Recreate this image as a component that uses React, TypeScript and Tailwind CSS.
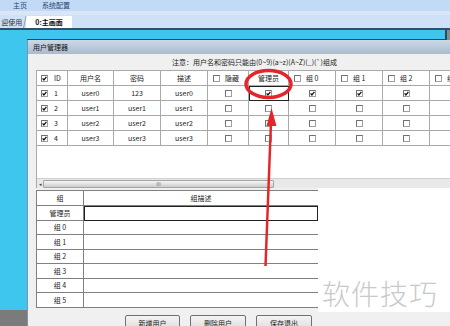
import React from "react";

function Cb({ checked }: { checked?: boolean }) {
  return (
    <svg width="7" height="7" viewBox="0 0 7 7" className="shrink-0 block">
      <rect x="0.5" y="0.5" width="6" height="6" fill="#ffffff" stroke="#a0a0a0" />
      <path d="M0.5 6.5 V0.5 H6.5" stroke="#707070" strokeWidth="1" fill="none" />
      {checked && <path d="M1.6 3.4 L2.9 4.9 L5.4 1.8" stroke="#111" strokeWidth="1.3" fill="none" />}
    </svg>
  );
}

const widths = [31, 46, 47, 47, 41, 40, 47, 47, 47, 47];

type Cell = { kind: "text"; t: string } | { kind: "cb"; c: boolean } | { kind: "cbt"; c: boolean; t: string; id?: boolean };

const header: Cell[] = [
  { kind: "cbt", c: true, t: "ID", id: true },
  { kind: "text", t: "用户名" },
  { kind: "text", t: "密码" },
  { kind: "text", t: "描述" },
  { kind: "cbt", c: false, t: "隐藏" },
  { kind: "text", t: "管理员" },
  { kind: "cbt", c: false, t: "组 0" },
  { kind: "cbt", c: false, t: "组 1" },
  { kind: "cbt", c: false, t: "组 2" },
  { kind: "cbt", c: false, t: "组 3" },
];

const users = [
  ["user0", "123", "user0"],
  ["user1", "user1", "user1"],
  ["user2", "user2", "user2"],
  ["user3", "user3", "user3"],
];

function rowCells(i: number): Cell[] {
  const u = users[i];
  const first = i === 0;
  return [
    { kind: "cbt", c: true, t: String(i + 1), id: true },
    { kind: "text", t: u[0] },
    { kind: "text", t: u[1] },
    { kind: "text", t: u[2] },
    { kind: "cb", c: false },
    { kind: "cb", c: first },
    { kind: "cb", c: first },
    { kind: "cb", c: first },
    { kind: "cb", c: first },
    { kind: "cb", c: first },
  ];
}

function CellView({ cell, w, sel }: { cell: Cell; w: number; sel?: boolean }) {
  const base =
    "h-full shrink-0 border-r border-b border-[#a9a9a9] flex items-center " +
    (sel ? "outline outline-1 outline-[#222] -outline-offset-1 " : "");
  if (cell.kind === "text")
    return (
      <div className={base + "justify-center"} style={{ width: w }}>
        {cell.t}
      </div>
    );
  if (cell.kind === "cb")
    return (
      <div className={base + "justify-center"} style={{ width: w }}>
        <Cb checked={cell.c} />
      </div>
    );
  return (
    <div className={base + (cell.id ? "pl-[4px] gap-[6px]" : "pl-[5px] gap-[5px]")} style={{ width: w }}>
      <Cb checked={cell.c} />
      <span className="whitespace-nowrap">{cell.t}</span>
    </div>
  );
}

const groups = ["管理员", "组 0", "组 1", "组 2", "组 3", "组 4", "组 5"];
const gHeights = [15, 14, 15, 14, 15, 14, 15];

export default function App() {
  return (
    <div className="relative w-[450px] h-[326px] overflow-hidden bg-[#3ec6ef] font-['Noto_Sans_CJK_SC','Noto_Sans',sans-serif] text-[7px] leading-none text-[#222]">
      {/* menu bar */}
      <div className="h-[11px] bg-[#c2daf5] flex items-center text-[#2a4670]">
        <span className="ml-[13px]">主页</span>
        <span className="ml-[15px]">系统配置</span>
      </div>
      <div className="h-[4px] bg-[#d8e6f8]" />
      {/* tab strip */}
      <div className="h-[13px] bg-[#cfe1f6] flex items-end">
        <div className="h-[12px] w-[24px] flex items-center text-[#333] border-r border-[#8aa3bf] -skew-x-12 origin-bottom">
          <span className="skew-x-12">迎使用</span>
        </div>
        <div className="ml-[2px] h-[12px] w-[46px] bg-white flex items-center justify-center font-bold text-[#111]">
          0:主画面
        </div>
      </div>
      <div className="h-[2px] bg-[#2f5067]" />

      {/* desktop */}
      <div className="flex h-[296px]">
        <div className="w-[27px] flex flex-col shrink-0">
          <div className="h-[280px] shrink-0 bg-[#3ec6ef]" />
          <div className="flex-1 bg-[#7b7b7b]" />
        </div>
        <div className="flex-1 flex flex-col min-w-0">
          <div className="h-[10px] shrink-0 flex">
            <div className="flex-1 bg-[#3ec6ef] border-r-2 border-b border-[#2c4a5e]" />
            <div className="w-[3px] bg-[#8a8a8a]" />
          </div>
          {/* dialog */}
          <div className="flex-1 flex flex-col border-l border-[#7f93aa] w-[440px] min-h-0">
            <div className="h-[14px] shrink-0 bg-gradient-to-b from-[#cdd8e6] to-[#a9bbd2] flex items-center pl-[5px] text-[#111]">
              用户管理器
            </div>
            <div className="flex-1 bg-[#f0f0f0] pl-[8px] flex flex-col min-h-0">
              <div className="h-[16px] shrink-0 flex items-center pl-[136px] text-[#222] whitespace-nowrap">
                注意：用户名和密码只能由(0~9)(a~z)(A~Z)(_)(`)组成
              </div>
              {/* table 1 */}
              <div className="w-[460px] h-[118px] shrink-0 bg-white border-l border-t border-[#a9a9a9] flex flex-col">
                <div className="h-[15px] flex shrink-0">
                  {header.map((c, i) => (
                    <CellView key={i} cell={c} w={widths[i]} />
                  ))}
                </div>
                {users.map((_, r) => (
                  <div key={r} className="h-[15px] flex shrink-0">
                    {rowCells(r).map((c, i) => (
                      <CellView key={i} cell={c} w={widths[i]} sel={r === 0 && i === 5} />
                    ))}
                  </div>
                ))}
                <div className="flex-1" />
                {/* scrollbar */}
                <div className="h-[10px] shrink-0 bg-[#e9e9e9] border-t border-[#d0d0d0] flex items-center">
                  <div className="w-[6px] flex items-center justify-center text-[5px] text-[#444]">◂</div>
                  <div className="w-[231px] h-[8px] rounded-[1px] border border-[#a4a4a4] bg-gradient-to-b from-[#f6f6f6] to-[#cdcdcd] flex items-center justify-center text-[5px] text-[#666]">
                    III
                  </div>
                </div>
              </div>
              {/* bottom area */}
              <div className="flex h-[124px] shrink-0">
                <div className="w-[282px] h-[118px] mt-[2px] bg-white border-l border-t border-[#808080] flex flex-col">
                  <div className="h-[15px] flex shrink-0">
                    <div className="w-[47px] border-r border-b border-[#808080] flex items-center justify-center">组</div>
                    <div className="flex-1 border-b border-[#808080] flex items-center justify-center">组描述</div>
                  </div>
                  {groups.map((g, i) => (
                    <div key={g} className="flex shrink-0" style={{ height: gHeights[i] }}>
                      <div className="w-[47px] border-r border-b border-[#808080] flex items-center justify-center">{g}</div>
                      <div
                        className={
                          "flex-1 border-b border-[#808080] " +
                          (i === 0 ? "outline outline-1 outline-[#222] -outline-offset-1" : "")
                        }
                      />
                    </div>
                  ))}
                </div>
                <div className="flex-1 bg-white pt-[91px] pl-[4px]">
                  <span className="text-[28px] font-light tracking-[1px] text-[#c9c9c9] whitespace-nowrap">软件技巧</span>
                </div>
              </div>
              {/* buttons */}
              <div className="flex shrink-0 mt-[3px] pl-[89px] gap-[10px]">
                <div className="w-[55px] h-[16px] border border-[#707070] rounded-[2px] bg-gradient-to-b from-[#f4f4f4] to-[#dcdcdc] flex items-center justify-center">新增用户</div>
                <div className="w-[56px] h-[16px] border border-[#707070] rounded-[2px] bg-gradient-to-b from-[#f4f4f4] to-[#dcdcdc] flex items-center justify-center">删除用户</div>
                <div className="w-[56px] h-[16px] border border-[#707070] rounded-[2px] bg-gradient-to-b from-[#f4f4f4] to-[#dcdcdc] flex items-center justify-center">保存退出</div>
              </div>
            </div>
          </div>
        </div>
      </div>

      {/* red annotation */}
      <svg className="absolute inset-0 pointer-events-none" width="450" height="326" viewBox="0 0 450 326">
        <ellipse cx="268.5" cy="84" rx="22.5" ry="13.5" fill="none" stroke="#e4262b" strokeWidth="3.5" />
        <line x1="265.5" y1="266" x2="271" y2="122" stroke="#e4262b" strokeWidth="2.5" />
        <polygon points="271.5,108 266.5,126 276.5,126" fill="#e4262b" />
      </svg>
    </div>
  );
}
